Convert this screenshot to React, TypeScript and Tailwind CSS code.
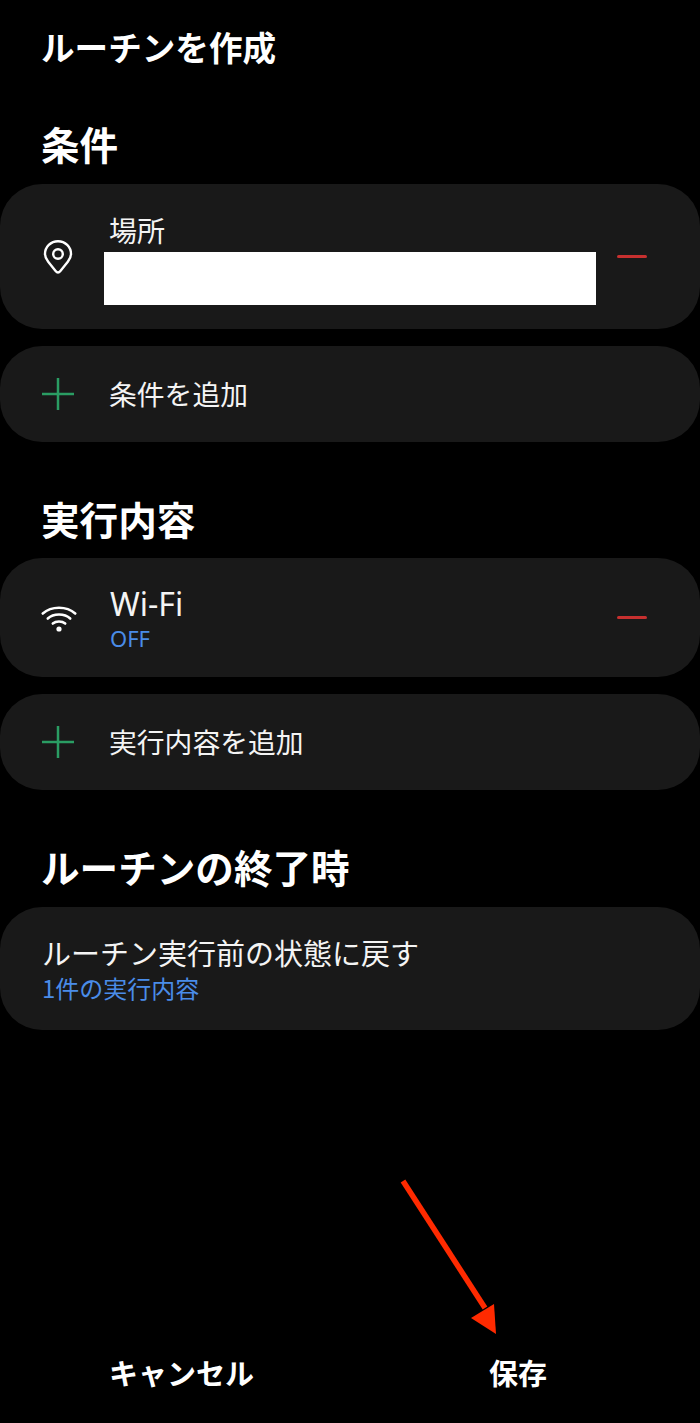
const FONT = "font-['Noto_Sans_CJK_JP','Noto_Sans',sans-serif]";

function Plus() {
  return (
    <svg width="32" height="32" viewBox="0 0 32 32" className="shrink-0">
      <path d="M0 16H32M16 0V32" stroke="#2a9d63" strokeWidth="2.5" fill="none" />
    </svg>
  );
}

function Minus() {
  return <div className="h-[3px] w-[30px] shrink-0 rounded-full bg-[#c7302f]" />;
}

function Pin() {
  return (
    <svg width="30" height="36" viewBox="0 0 30 36" fill="none" stroke="#fff" strokeWidth="2.4" className="shrink-0">
      <path d="M15 33.5 C14 33.5 13.4 33 12.6 32 L5.2 22.8 C3 20 2 17.5 2 15 C2 8 7.8 2.2 15 2.2 C22.2 2.2 28 8 28 15 C28 17.5 27 20 24.8 22.8 L17.4 32 C16.6 33 16 33.5 15 33.5 Z" />
      <circle cx="15" cy="15" r="4.8" />
    </svg>
  );
}

function Wifi() {
  return (
    <svg width="36" height="28" viewBox="0 0 36 28" fill="none" stroke="#fff" strokeWidth="2.6" strokeLinecap="round" className="shrink-0">
      <path d="M1.8 9.5 C10.5 1.8 25.5 1.8 34.2 9.5" />
      <path d="M6.8 14.5 C12.5 9.2 23.5 9.2 29.2 14.5" />
      <path d="M11.8 19.5 C15 16.8 21 16.8 24.2 19.5" />
      <circle cx="18" cy="25" r="2.6" fill="#fff" stroke="none" />
    </svg>
  );
}

function AddRow({ label }: { label: string }) {
  return (
    <div className="flex h-[96px] items-center rounded-[42px] bg-[#191919] pl-[42px]">
      <Plus />
      <span className="ml-[35px] text-[27.8px] leading-none text-[#f4f4f4]">{label}</span>
    </div>
  );
}

function Heading({ children, className }: { children: string; className: string }) {
  return <h2 className={`pl-[41px] text-[38.6px] leading-[46px] font-bold text-white ${className}`}>{children}</h2>;
}

export default function App() {
  return (
    <div className={`relative h-[1423px] w-[700px] overflow-hidden bg-black ${FONT}`}>
      <h1 className="pt-[26px] pl-[41px] text-[33.6px] leading-[42px] font-bold text-white">ルーチンを作成</h1>

      <Heading className="mt-[52px]">条件</Heading>
      <div className="mt-[18px] flex h-[145px] items-center rounded-[42px] bg-[#191919] pl-[43px]">
        <Pin />
        <div className="ml-[31px] flex w-[492px] flex-col pt-[2px]">
          <span className="pl-[5px] text-[28px] leading-[40px] text-[#f4f4f4]">場所</span>
          <div className="mt-[2px] h-[53px] w-[492px] bg-white" />
        </div>
        <div className="ml-[21px]">
          <Minus />
        </div>
      </div>
      <div className="mt-[17px]">
        <AddRow label="条件を追加" />
      </div>

      <Heading className="mt-[53px]">実行内容</Heading>
      <div className="mt-[17px] flex h-[119px] items-center rounded-[42px] bg-[#191919] pl-[41px]">
        <Wifi />
        <div className="ml-[33px] flex w-[507px] flex-col pt-[2px]">
          <span className="text-[32px] leading-[38px] text-[#f4f4f4] font-['Noto_Sans',sans-serif]">Wi-Fi</span>
          <span className="text-[22px] leading-[30px] text-[#4a8ce8] font-['Noto_Sans',sans-serif]">OFF</span>
        </div>
        <Minus />
      </div>
      <div className="mt-[17px]">
        <AddRow label="実行内容を追加" />
      </div>

      <Heading className="mt-[53px]">ルーチンの終了時</Heading>
      <div className="mt-[18px] flex h-[123px] flex-col justify-center rounded-[42px] bg-[#191919] pb-[2px] pl-[42px]">
        <span className="text-[29px] leading-[40px] text-[#f4f4f4]">ルーチン実行前の状態に戻す</span>
        <span className="text-[24px] leading-[32px] text-[#4a8ce8]">1件の実行内容</span>
      </div>

      <div className="mt-[322px] flex text-[29px] leading-[40px] font-bold text-white">
        <span className="ml-[109px]">キャンセル</span>
        <span className="ml-[235px]">保存</span>
      </div>

      <svg width="110" height="170" viewBox="0 0 110 170" className="absolute top-[1170px] left-[390px]">
        <path d="M13 11 L95 138" stroke="#ff2a00" strokeWidth="5.5" fill="none" />
        <path d="M81 148 L104 134 L106 164 Z" fill="#ff2a00" />
      </svg>
    </div>
  );
}
